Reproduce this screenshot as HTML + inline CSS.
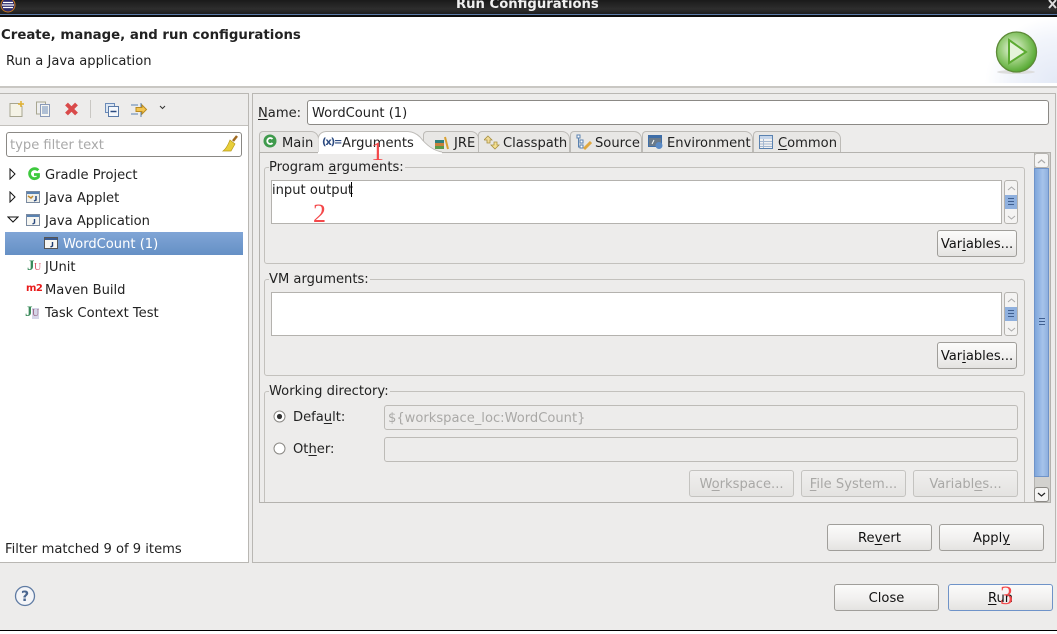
<!DOCTYPE html>
<html><head><meta charset="utf-8"><style>
html,body{margin:0;padding:0;width:1057px;height:634px;overflow:hidden;background:#edeceb}
body{position:relative;font:13.1px/16px "DejaVu Sans",sans-serif;color:#222}
.a,.t,.b,.g,.f,svg{position:absolute}
.t{white-space:nowrap;height:16px;margin-top:2px}
u{text-underline-offset:2px}
.b{box-sizing:border-box;border:1px solid #a09e9a;border-radius:3px;background:linear-gradient(#fbfbfa,#f2f1f0 50%,#e4e3e1);text-align:center;line-height:27px;color:#111;height:27px;width:105px}
.b.d{color:#a9a8a6;border-color:#c4c3c0;background:linear-gradient(#f0efee,#e4e3e1)}
.g{box-sizing:border-box;border:1px solid #c3c1bd;border-radius:3px;left:264px;width:761px}
.l{background:#edeceb;padding-right:1px}
.f{box-sizing:border-box;background:#fff;border:1px solid #b4b2ae;left:271px;width:731px;height:44px}
.ms{position:absolute;left:1004px;width:14px;height:44px;box-sizing:border-box;border:1px solid #b4b2ae;border-radius:3px;background:#f4f3f2}
.ms i{position:absolute;left:0;top:14px;width:12px;height:14px;background:#8fb0de}
.tab{position:absolute;top:131px;height:21px;box-sizing:border-box;border:1px solid #bdbbb7;border-bottom:0;border-radius:4px 8px 0 0;background:#e8e7e5}
.rd{position:absolute;font:26px/28px "Liberation Serif",serif;color:#f4484a}
</style></head><body>
<div class="a" style="left:0;top:0;width:1057px;height:15px;background:linear-gradient(#1a1a1a,#2e2e2e 60%,#1a1a1a)"></div>
<div class="a" style="left:0;top:14px;width:1057px;height:1px;background:#5b7ba8"></div>
<div class="a" style="left:0;top:15px;width:1057px;height:2px;background:#0c0c0c"></div>
<svg style="left:0;top:0" width="16" height="13"><circle cx="8" cy="5" r="7" fill="#2c2a6b" stroke="#c8781e"/><path d="M3 2.500h10M2 5h12M3 7.500h10" stroke="#fff" stroke-width="1.300"/></svg>
<div class="t" style="left:456px;top:-5px;color:#f0f0f0;font-weight:bold;font-size:13.2px">Run Configurations</div>
<svg style="left:1048px;top:0" width="9" height="9"><path d="M1 0l7 8M8 0L1 8" stroke="#ddd" stroke-width="2"/></svg>

<div class="a" style="left:0;top:17px;width:1057px;height:69px;background:#fff"></div>
<div class="a" style="left:985px;top:17px;width:72px;height:66px;background:radial-gradient(ellipse 72px 66px at 100% 100%,#e3e9f6,#f1f4fb 65%,#fff 100%)"></div>
<div class="a" style="left:0;top:86px;width:1057px;height:2px;background:#c9c7c3"></div>
<div class="t" style="left:1px;top:26px;font-weight:bold;color:#222;font-size:13.3px">Create, manage, and run configurations</div>
<div class="t" style="left:6px;top:52px">Run a Java application</div>
<svg style="left:994px;top:30px" width="46" height="46"><defs><radialGradient id="g" cx=".42" cy=".42" r=".62"><stop offset="0" stop-color="#eef6e8"/><stop offset=".5" stop-color="#9ccf7e"/><stop offset="1" stop-color="#4ea52a"/></radialGradient></defs><ellipse cx="22" cy="42" rx="19" ry="2" fill="#ddd"/><circle cx="22.500" cy="22" r="20" fill="url(#g)" stroke="#5d8a38" stroke-width="1.300"/><path d="M15 10L32 22L15 33Z" fill="#e5f3da" stroke="#5cab32" stroke-width="2"/></svg>

<!-- left panel -->
<div class="a" style="left:-1px;top:93px;width:250px;height:470px;box-sizing:border-box;border:1px solid #b9b7b3;background:#fff"></div>
<div class="a" style="left:0;top:94px;width:248px;height:31px;background:#edeceb;border-bottom:1px solid #c3c1bd"></div>
<svg style="left:9px;top:101px" width="16" height="16"><path d="M1 2.500h9l3 3v10H1z" fill="#f5f3e6" stroke="#a8a690"/><path d="M12 0v6M9 3h6" stroke="#e0b030" stroke-width="1.500"/></svg>
<svg style="left:36px;top:101px" width="16" height="16"><path d="M.5 1h9v12h-9z" fill="#eee" stroke="#a8a690"/><path d="M4.500 3.500h9v12h-9z" fill="#f7f7f2" stroke="#8a9ab8"/><path d="M6 6h6M6 8h6M6 10h6M6 12h6" stroke="#6a8ab8"/></svg>
<svg style="left:64px;top:102px" width="15" height="14"><path d="M2.500 2L12.500 12M12.500 2L2.500 12" stroke="#d94a4a" stroke-width="4"/></svg>
<div class="a" style="left:90px;top:100px;width:1px;height:18px;background:#c9c7c3"></div>
<svg style="left:105px;top:103px" width="14" height="14"><path d="M.5.5h9v9h-9z" fill="#dce6f2" stroke="#6a8ab8"/><path d="M3.500 3.500h10v10h-10z" fill="#f4f7fb" stroke="#5a7aa8"/><path d="M5.500 8.500h6" stroke="#2b4a80" stroke-width="1.500"/></svg>
<svg style="left:131px;top:102px" width="17" height="15"><path d="M0 3h7M0 12h7M10 1v14" stroke="#5a82b0"/><path d="M5 5.500h6V3l4.500 4.500L11 12V9.500H5z" fill="#f3c552" stroke="#b98a20"/></svg>
<svg style="left:159px;top:105px" width="7" height="5"><path d="M1 1l2.500 2.500L6 1" fill="none" stroke="#333"/></svg>

<div class="a" style="left:6px;top:132px;width:236px;height:25px;box-sizing:border-box;border:1px solid #8b8985;border-radius:3px;background:#fff"></div>
<div class="t" style="left:10px;top:136px;color:#a9a9a9">type filter text</div>
<svg style="left:222px;top:135px" width="17" height="18"><path d="M11 6l4-5" stroke="#a06a20" stroke-width="2.500"/><path d="M8 5l5 4-4 7-8 0c3-2 5-6 7-11z" fill="#e8cf3a" stroke="#b89a18" stroke-width=".7"/></svg>

<svg style="left:9px;top:168px" width="8" height="12"><path d="M1 1l5 5-5 5z" fill="#fff" stroke="#111"/></svg>
<svg style="left:9px;top:191px" width="8" height="12"><path d="M1 1l5 5-5 5z" fill="#fff" stroke="#111"/></svg>
<svg style="left:7px;top:216px" width="12" height="8"><path d="M1 1h10l-5 5z" fill="#fff" stroke="#111"/></svg>
<div class="a" style="left:5px;top:232px;width:238px;height:23px;background:linear-gradient(#80a5d6,#6590c5)"></div>

<svg style="left:27px;top:167px" width="13" height="14"><path d="M11.300 3.300A5 5 0 1 0 11.500 9.800V7.500H7" fill="none" stroke="#3ec93e" stroke-width="2.800"/></svg>
<svg style="left:26px;top:191px" width="14" height="12"><path d="M.5.5h13v11H.5z" fill="#f0f0ea" stroke="#7a8aa0"/><path d="M1 1h12v2H1z" fill="#5a82b0"/><path d="M2 5l3 2 2-2" fill="none" stroke="#c08a30" stroke-width="1.500"/><path d="M10 5v4l-2 1" fill="none" stroke="#2b4a80" stroke-width="1.500"/></svg>
<svg style="left:26px;top:214px" width="14" height="12"><path d="M.5.5h13v11H.5z" fill="#f6f6f2" stroke="#7a8aa0"/><path d="M1 1h12v2H1z" fill="#5a82b0"/><path d="M8.500 5v4l-2 1" fill="none" stroke="#2b4a80" stroke-width="1.400"/></svg>
<svg style="left:44px;top:237px" width="14" height="12"><path d="M.5.5h13v11H.5z" fill="#f6f6f2" stroke="#555"/><path d="M1 1h12v2H1z" fill="#3a5a90"/><path d="M8.500 5v4l-2 1" fill="none" stroke="#1b3a70" stroke-width="1.400"/></svg>
<div class="t" style="left:27px;top:256px;font:bold 15px/16px 'Liberation Serif',serif;color:#3a8a5a;letter-spacing:-.5px">J<span style="color:#d9576a;font-size:10px;font-weight:normal">U</span></div>
<div class="t" style="left:26px;top:279px;font:bold 10px/16px 'DejaVu Sans',sans-serif;color:#e81a1a;letter-spacing:-.6px">m2</div>
<div class="t" style="left:25px;top:302px;font:bold 15px/16px 'Liberation Serif',serif;color:#3a8a5a;letter-spacing:-.5px">J<span style="color:#9a6a8a;font-size:10px;font-weight:normal;background:#d5d5e8">U</span></div>

<div class="t" style="left:45px;top:166px">Gradle Project</div>
<div class="t" style="left:45px;top:189px">Java Applet</div>
<div class="t" style="left:45px;top:212px">Java Application</div>
<div class="t" style="left:63px;top:235px;color:#fff">WordCount (1)</div>
<div class="t" style="left:45px;top:258px">JUnit</div>
<div class="t" style="left:45px;top:281px">Maven Build</div>
<div class="t" style="left:45px;top:304px">Task Context Test</div>
<div class="t" style="left:5px;top:540px">Filter matched 9 of 9 items</div>

<!-- right panel -->
<div class="a" style="left:252px;top:93px;width:804px;height:470px;box-sizing:border-box;border:1px solid #b9b7b3"></div>
<div class="t" style="left:258px;top:104px"><u>N</u>ame:</div>
<div class="a" style="left:307px;top:100px;width:742px;height:25px;box-sizing:border-box;border:1px solid #8b8985;border-radius:3px;background:#fff"></div>
<div class="t" style="left:312px;top:104px">WordCount (1)</div>

<div class="a" style="left:259px;top:152px;width:792px;height:351px;box-sizing:border-box;border:1px solid #b4b2ae;border-top:1px solid #b4b2ae"></div>
<div class="tab" style="left:259px;width:60px"></div>
<div class="tab" style="left:423px;width:56px"></div>
<div class="tab" style="left:478px;width:92px"></div>
<div class="tab" style="left:570px;width:72px"></div>
<div class="tab" style="left:642px;width:111px"></div>
<div class="tab" style="left:753px;width:88px"></div>
<svg style="left:318px;top:131px" width="125" height="23"><path d="M0 22V8Q1 1 8 0.500H90Q97 1 102 6Q112 19 124 21V23H0z" fill="#fff"/><path d="M0 21V8Q1 1 8 .5H90Q97 1 102 6Q112 19 124 21" fill="none" stroke="#bdbbb7"/></svg>

<svg style="left:263px;top:134px" width="14" height="14"><circle cx="7" cy="7" r="6.500" fill="#3f9a4c"/><path d="M9.500 5A3 3 0 1 0 9.500 9" fill="none" stroke="#fff" stroke-width="1.800"/></svg>
<div class="t" style="left:322px;top:133px;font-size:10px;font-weight:bold;color:#2b4a80;letter-spacing:-1.2px">(x)=</div>
<svg style="left:434px;top:135px" width="16" height="15"><path d="M1 5h9v3H1z" fill="#2f7f7a"/><path d="M1 8h9v3H1z" fill="#c9803a"/><path d="M1 11h9v3H1z" fill="#5a9a4a"/><path d="M11 2l3 12" stroke="#d9a030" stroke-width="2"/></svg>
<svg style="left:484px;top:135px" width="16" height="15"><path d="M4 1l4 4H6v3H3V5H0z" fill="#f1dc9a" stroke="#a89040" stroke-width=".8"/><path d="M11 14l4-4h-2V7h-3v3H7z" fill="#f5e090" stroke="#a89040" stroke-width=".8"/></svg>
<svg style="left:576px;top:134px" width="16" height="17"><path d="M1 1h3v3H1zM4 6h3v3H4zM4 11h3v3H4z" fill="#fff" stroke="#5a82b0"/><path d="M2.500 4v9h2" fill="none" stroke="#5a82b0"/><path d="M8 15l7-7" stroke="#e0a840" stroke-width="3"/></svg>
<svg style="left:648px;top:135px" width="15" height="14"><path d="M0 0h14v12H0z" fill="#3f6ea8"/><path d="M1 3h12v8H1z" fill="#6a7a8a"/><path d="M4 9l2-4" stroke="#fff"/><circle cx="11" cy="10.500" r="3.500" fill="#5a8ac5"/></svg>
<svg style="left:759px;top:135px" width="14" height="14"><path d="M.5.5h13v13H.5z" fill="#f2f2f2" stroke="#5a82b0"/><path d="M1 1h12v3H1z" fill="#c5d5ea"/><path d="M1 6.500h12M1 9h12M1 11.500h12M4.500 4v9" stroke="#a5b8d0"/></svg>

<div class="t" style="left:282px;top:134px">Main</div>
<div class="t" style="left:342px;top:134px">Arguments</div>
<div class="t" style="left:454px;top:134px">JRE</div>
<div class="t" style="left:503px;top:134px">Classpath</div>
<div class="t" style="left:595px;top:134px">Source</div>
<div class="t" style="left:667px;top:134px">Environment</div>
<div class="t" style="left:778px;top:134px"><u>C</u>ommon</div>

<div class="g" style="top:167px;height:97px"></div>
<div class="t l" style="left:269px;top:158px">Program <u>a</u>rguments:</div>
<div class="f" style="top:180px"></div>
<div class="t" style="left:272px;top:181px">input output</div>
<div class="a" style="left:351px;top:182px;width:1px;height:15px;background:#000"></div>
<div class="ms" style="top:180px"><i></i></div>
<div class="b" style="left:937px;top:230px;width:80px">Var<u>i</u>ables...</div>

<div class="g" style="top:279px;height:97px"></div>
<div class="t l" style="left:269px;top:270px">VM arguments:</div>
<div class="f" style="top:292px"></div>
<div class="ms" style="top:292px"><i></i></div>
<div class="b" style="left:937px;top:342px;width:80px">Var<u>i</u>ables...</div>

<div class="a" style="left:264px;top:391px;width:761px;height:111px;box-sizing:border-box;border:1px solid #c3c1bd;border-bottom:0;border-radius:3px 3px 0 0"></div>
<div class="t l" style="left:269px;top:382px">Working directory:</div>
<svg style="left:273px;top:410px" width="13" height="13"><circle cx="6.500" cy="6.500" r="5.500" fill="#fff" stroke="#8b8985"/><circle cx="6.500" cy="6.500" r="2.600" fill="#333"/></svg>
<svg style="left:273px;top:442px" width="13" height="13"><circle cx="6.500" cy="6.500" r="5.500" fill="#fff" stroke="#8b8985"/></svg>
<div class="t" style="left:293px;top:408px">Defa<u>u</u>lt:</div>
<div class="t" style="left:293px;top:440px">Ot<u>h</u>er:</div>
<div class="a" style="left:384px;top:405px;width:634px;height:25px;box-sizing:border-box;border:1px solid #bdbbb7;border-radius:3px"></div>
<div class="t" style="left:388px;top:409px;color:#a9a8a6">${workspace_loc:WordCount}</div>
<div class="a" style="left:384px;top:437px;width:634px;height:25px;box-sizing:border-box;border:1px solid #bdbbb7;border-radius:3px"></div>
<div class="b d" style="left:689px;top:470px">W<u>o</u>rkspace...</div>
<div class="b d" style="left:801px;top:470px"><u>F</u>ile System...</div>
<div class="b d" style="left:913px;top:470px">Variabl<u>e</u>s...</div>

<!-- main scrollbar -->
<div class="a" style="left:1034px;top:153px;width:16px;height:349px;box-sizing:border-box;background:#d2d1ce;border-left:1px solid #b4b2ae"></div>
<div class="a" style="left:1034px;top:168px;width:15px;height:309px;box-sizing:border-box;background:linear-gradient(90deg,#7fa6dc,#a6c3ea 60%,#8fb0de);border:1px solid #6f93c8"></div>
<div class="a" style="left:1034px;top:153px;width:15px;height:15px;box-sizing:border-box;background:#f5f4f3;border:1px solid #b4b2ae;border-radius:3px"></div>
<div class="a" style="left:1034px;top:487px;width:15px;height:15px;box-sizing:border-box;background:#f5f4f3;border:1px solid #8b8985;border-radius:3px"></div>
<svg style="left:1037px;top:159px" width="9" height="5"><path d="M1 4l3.500-3L8 4" fill="none" stroke="#aaa" stroke-width="1.200"/></svg>
<svg style="left:1037px;top:492px" width="9" height="5"><path d="M1 1l3.500 3L8 1" fill="none" stroke="#222" stroke-width="1.200"/></svg>
<svg style="left:1038px;top:317px" width="8" height="9"><path d="M1 1.500h6M1 4.500h6M1 7.500h6" stroke="#3f5f90"/></svg>
<svg style="left:1007px;top:185px" width="9" height="36"><path d="M1 5l3.500-3L8 5M1 31l3.500 3L8 31" fill="none" stroke="#aaa"/><path d="M1 13.500h6M1 16.500h6M1 19.500h6" stroke="#3f5f90"/></svg>
<svg style="left:1007px;top:297px" width="9" height="36"><path d="M1 5l3.500-3L8 5M1 31l3.500 3L8 31" fill="none" stroke="#aaa"/><path d="M1 13.500h6M1 16.500h6M1 19.500h6" stroke="#3f5f90"/></svg>

<div class="b" style="left:827px;top:524px">Re<u>v</u>ert</div>
<div class="b" style="left:939px;top:524px">Appl<u>y</u></div>

<svg style="left:14px;top:585px" width="22" height="22"><circle cx="11" cy="11" r="9.500" fill="#f4f5f8" stroke="#5f7ba3" stroke-width="1.300"/><text x="11" y="16" text-anchor="middle" font-family="DejaVu Sans" font-weight="bold" font-size="14" fill="#4a6690">?</text></svg>
<div class="b" style="left:834px;top:584px">Close</div>
<div class="b" style="left:948px;top:584px;border-color:#6f93c8"><u>R</u>un</div>

<div class="a" style="left:0;top:630px;width:1057px;height:1px;background:#000"></div>
<div class="a" style="left:0;top:631px;width:1057px;height:3px;background:#fff"></div>

<div class="rd" style="left:371px;top:138px">1</div>
<div class="rd" style="left:313px;top:200px">2</div>
<div class="rd" style="left:1000px;top:582px">3</div>
</body></html>
